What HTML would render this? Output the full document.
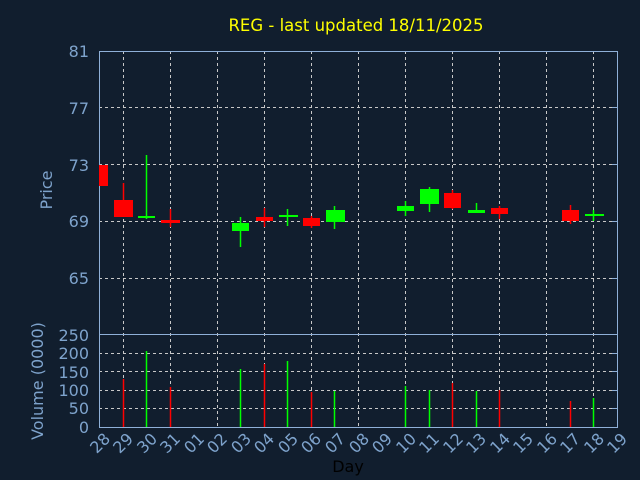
<!DOCTYPE html><html><head><style>html,body{margin:0;padding:0;background:#111e2e;overflow:hidden;width:640px;height:480px}svg{display:block}</style></head><body>
<svg width="640" height="480" xmlns="http://www.w3.org/2000/svg" font-family="DejaVu Sans, sans-serif">
<rect width="640" height="480" fill="#111e2e"/>
<text x="356" y="31" fill="#ffff00" font-size="16.5" text-anchor="middle">REG - last updated 18/11/2025</text>
<g stroke="#c8c8c8" stroke-dasharray="3,3" stroke-width="1">
<path d="M123.5 51V427M170.5 51V427M217.5 51V427M264.5 51V427M311.5 51V427M358.5 51V427M405.5 51V427M452.5 51V427M499.5 51V427M546.5 51V427M593.5 51V427"/>
<path d="M99 107.5H617M99 164.5H617M99 221.5H617M99 278.5H617M99 408.5H617M99 390.5H617M99 371.5H617M99 353.5H617"/>
</g>
<g stroke="#8fb0d8" fill="none">
<rect x="99.5" y="51.5" width="518" height="376"/>
<path d="M99 334.5H617"/>
<path d="M617 107.5h-5M617 164.5h-5M617 221.5h-5M617 278.5h-5M617 408.5h-5M617 390.5h-5M617 371.5h-5M617 353.5h-5"/>
</g>
<g fill="#7ea3cc" font-size="16" text-anchor="end">
<text x="89" y="57">81</text><text x="89" y="114">77</text><text x="89" y="171">73</text><text x="89" y="227">69</text><text x="89" y="284">65</text>
<text x="89" y="341">250</text><text x="89" y="359">200</text><text x="89" y="378">150</text><text x="89" y="396">100</text><text x="89" y="414">50</text><text x="89" y="433">0</text>
</g>
<text transform="translate(52,190) rotate(-90)" fill="#7ea3cc" font-size="16" text-anchor="middle">Price</text>
<text transform="translate(43,381) rotate(-90)" fill="#7ea3cc" font-size="16" text-anchor="middle">Volume (0000)</text>
<g fill="#7ea3cc" font-size="16">
<text transform="translate(104,447) rotate(-45)" text-anchor="middle">28</text>
<text transform="translate(127,447) rotate(-45)" text-anchor="middle">29</text>
<text transform="translate(151,447) rotate(-45)" text-anchor="middle">30</text>
<text transform="translate(174,447) rotate(-45)" text-anchor="middle">31</text>
<text transform="translate(198,447) rotate(-45)" text-anchor="middle">01</text>
<text transform="translate(221,447) rotate(-45)" text-anchor="middle">02</text>
<text transform="translate(245,447) rotate(-45)" text-anchor="middle">03</text>
<text transform="translate(268,447) rotate(-45)" text-anchor="middle">04</text>
<text transform="translate(292,447) rotate(-45)" text-anchor="middle">05</text>
<text transform="translate(315,447) rotate(-45)" text-anchor="middle">06</text>
<text transform="translate(339,447) rotate(-45)" text-anchor="middle">07</text>
<text transform="translate(363,447) rotate(-45)" text-anchor="middle">08</text>
<text transform="translate(386,447) rotate(-45)" text-anchor="middle">09</text>
<text transform="translate(410,447) rotate(-45)" text-anchor="middle">10</text>
<text transform="translate(433,447) rotate(-45)" text-anchor="middle">11</text>
<text transform="translate(457,447) rotate(-45)" text-anchor="middle">12</text>
<text transform="translate(480,447) rotate(-45)" text-anchor="middle">13</text>
<text transform="translate(504,447) rotate(-45)" text-anchor="middle">14</text>
<text transform="translate(527,447) rotate(-45)" text-anchor="middle">15</text>
<text transform="translate(551,447) rotate(-45)" text-anchor="middle">16</text>
<text transform="translate(574,447) rotate(-45)" text-anchor="middle">17</text>
<text transform="translate(598,447) rotate(-45)" text-anchor="middle">18</text>
<text transform="translate(621,447) rotate(-45)" text-anchor="middle">19</text>
</g>
<text x="348" y="472" fill="#000" font-size="16" text-anchor="middle">Day</text>
<g stroke-width="1.5">
<path stroke="#ff0000" d="M123.5 183V217M170.5 209V227M264.5 208V227M311.5 216V228M452.5 190V209M499.5 206V219M570.5 205V224"/>
<path stroke="#00ff00" d="M146.5 155V219M240.5 217V247M287.5 209V226M334.5 206V229M405.5 201V216M429.5 187V212M476.5 203V212M593.5 210V221"/>
</g>
<g fill="#ff0000">
<rect x="99" y="165" width="9" height="21"/><rect x="114" y="200" width="19" height="17"/><rect x="161" y="220" width="19" height="3"/>
<rect x="256" y="217" width="17" height="4"/><rect x="303" y="218" width="17" height="8"/><rect x="444" y="193" width="17" height="15"/>
<rect x="491" y="208" width="17" height="6"/><rect x="562" y="210" width="17" height="11"/>
</g>
<g fill="#00ff00">
<rect x="138" y="216" width="17" height="2"/><rect x="232" y="223" width="17" height="8"/><rect x="279" y="215" width="19" height="2"/>
<rect x="326" y="210" width="19" height="12"/><rect x="397" y="206" width="17" height="5"/><rect x="420" y="189" width="19" height="15"/>
<rect x="468" y="210" width="17" height="3"/><rect x="585" y="214" width="19" height="2"/>
</g>
<g stroke-width="1.5">
<path stroke="#ff0000" d="M123.5 379V427M170.5 387V427M264.5 364V427M311.5 392V427M452.5 383V427M499.5 390V427M570.5 401V427"/>
<path stroke="#00ff00" d="M146.5 351V427M240.5 369V427M287.5 361V427M334.5 391V427M405.5 386V427M429.5 390V427M476.5 391V427M593.5 398V427"/>
</g>
</svg></body></html>
